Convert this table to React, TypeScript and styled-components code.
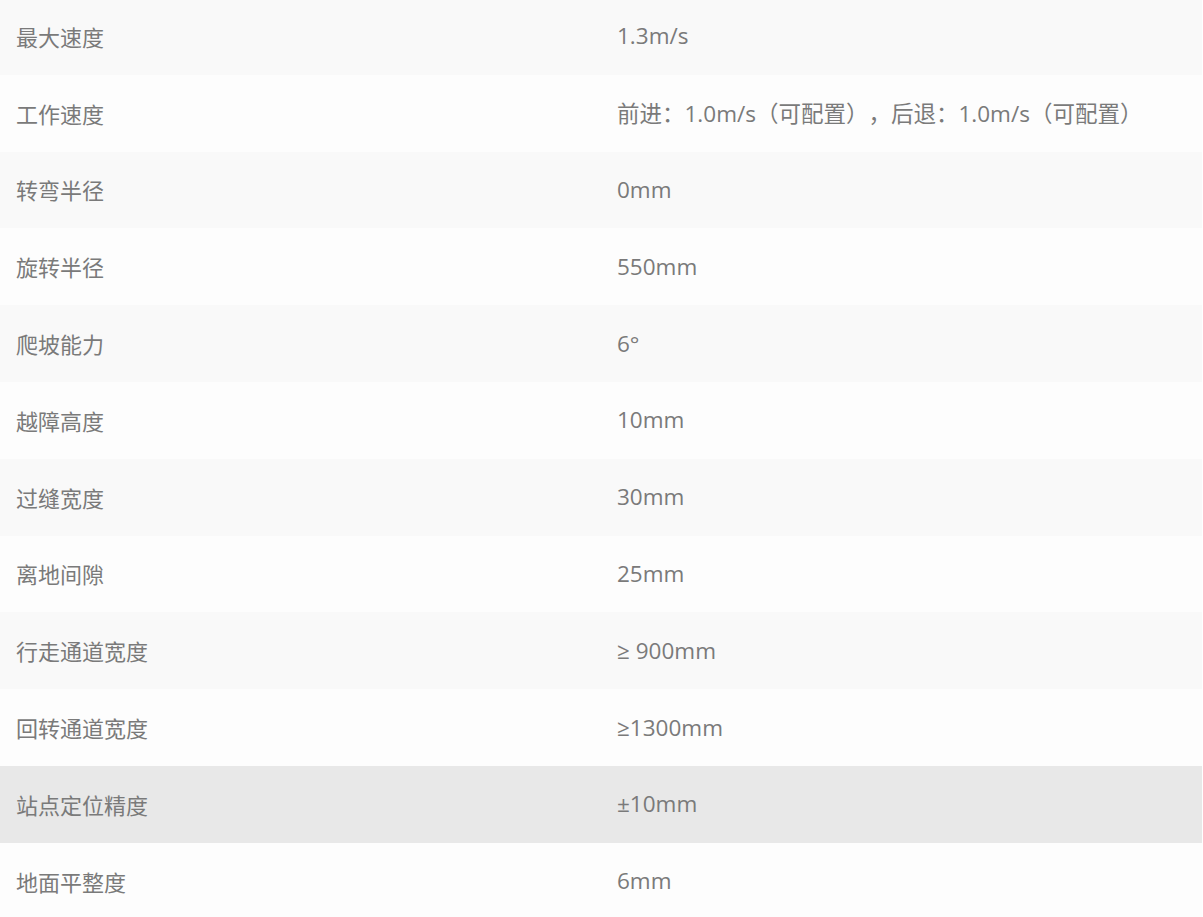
import React, { ReactElement } from 'react';
import styled, { createGlobalStyle } from 'styled-components';

const Global = createGlobalStyle`
  html, body {
    margin: 0;
    padding: 0;
    background: #ffffff;
  }
  body {
    font-family: "Open Sans", "Noto Sans CJK SC", sans-serif;
  }
`;

const Table = styled.table`
  width: 1202px;
  border-collapse: collapse;
  margin-top: -2px;
  table-layout: fixed;
`;

const Row = styled.tr<{ $shade: 'odd' | 'even' | 'hover' }>`
  height: 76.8px;
  background: ${(p) =>
    p.$shade === 'hover' ? '#e8e8e8' : p.$shade === 'odd' ? '#f9f9f9' : '#fdfdfd'};
`;

const Cell = styled.td<{ $value?: boolean }>`
  padding: 0 16px 1px;
  font-size: ${(p) => (p.$value ? '22.5px' : '22px')};
  color: #7a7a7a;
  vertical-align: middle;
  white-space: nowrap;
  width: 50%;
  text-spacing-trim: space-all;
`;

const specs: [string, string][] = [
  ['最大速度', '1.3m/s'],
  ['工作速度', '前进：1.0m/s（可配置），后退：1.0m/s（可配置）'],
  ['转弯半径', '0mm'],
  ['旋转半径', '550mm'],
  ['爬坡能力', '6°'],
  ['越障高度', '10mm'],
  ['过缝宽度', '30mm'],
  ['离地间隙', '25mm'],
  ['行走通道宽度', '≥ 900mm'],
  ['回转通道宽度', '≥1300mm'],
  ['站点定位精度', '±10mm'],
  ['地面平整度', '6mm'],
];

export default function App(): ReactElement {
  return (
    <>
      <Global />
      <Table>
        <tbody>
          {specs.map(([name, value], i) => (
            <Row key={name} $shade={i === 10 ? 'hover' : i % 2 === 0 ? 'odd' : 'even'}>
              <Cell>{name}</Cell>
              <Cell $value>{value}</Cell>
            </Row>
          ))}
        </tbody>
      </Table>
    </>
  );
}
